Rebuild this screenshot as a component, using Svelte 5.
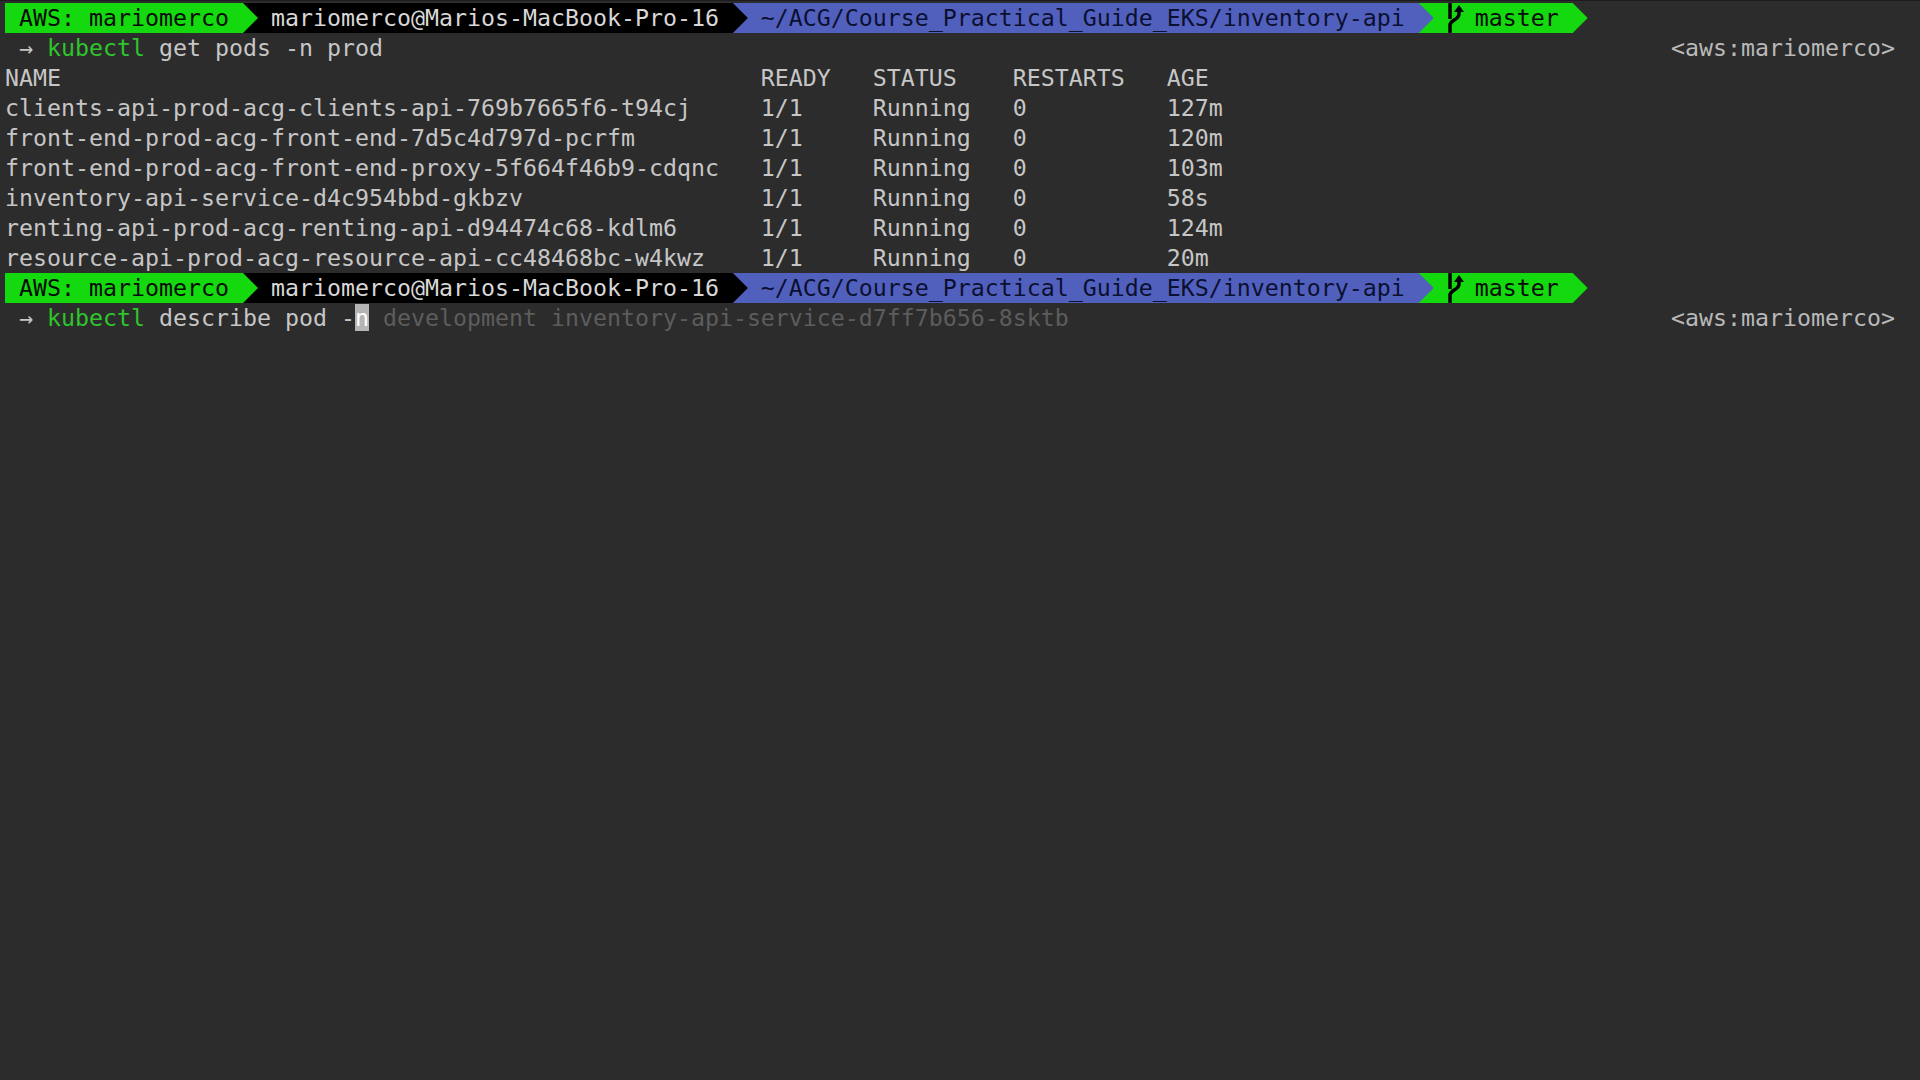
<script>
    const segments = [
        {text: ' AWS: mariomerco ', cls: 'green', next: 'black'},
        {text: ' mariomerco@Marios-MacBook-Pro-16 ', cls: 'black', next: 'blue'},
        {text: ' ~/ACG/Course_Practical_Guide_EKS/inventory-api ', cls: 'blue', next: 'green'},
        {text: 'master ', cls: 'green', next: 'none', branch: true}
    ];

    const pods = [
        ['clients-api-prod-acg-clients-api-769b7665f6-t94cj', '127m'],
        ['front-end-prod-acg-front-end-7d5c4d797d-pcrfm', '120m'],
        ['front-end-prod-acg-front-end-proxy-5f664f46b9-cdqnc', '103m'],
        ['inventory-api-service-d4c954bbd-gkbzv', '58s'],
        ['renting-api-prod-acg-renting-api-d94474c68-kdlm6', '124m'],
        ['resource-api-prod-acg-resource-api-cc48468bc-w4kwz', '20m']
    ];
</script>

{#snippet prompt()}
    <div class="line bar">
        {#each segments as seg}
            <span class="seg {seg.cls}">{#if seg.branch}<span class="branch"><svg width="42" height="30" viewBox="0 0 42 30"><path d="M17 0V16M17 30V22C17 17 26 17 26 11V7" fill="none" stroke="#000" stroke-width="3.500"/><path d="M21 9L26 2L31 9Z" fill="#000"/></svg></span>{/if}{seg.text}</span>
            <span class="arrow {seg.next}"><i class={seg.cls}></i></span>
        {/each}
    </div>
{/snippet}

{#snippet rprompt()}
    <span class="right">&lt;aws:mariomerco&gt;</span>
{/snippet}

<main class="term">
    {@render prompt()}
    <div class="line">
        <span class="input"><span class="dim">→</span> <span class="cmd">kubectl</span> get pods -n prod</span>
        {@render rprompt()}
    </div>
    <div class="line table"><span>NAME</span><span>READY</span><span>STATUS</span><span>RESTARTS</span><span>AGE</span></div>
    {#each pods as pod}
        <div class="line table"><span>{pod[0]}</span><span>1/1</span><span>Running</span><span>0</span><span>{pod[1]}</span></div>
    {/each}
    {@render prompt()}
    <div class="line">
        <span class="input"><span class="dim">→</span> <span class="cmd">kubectl</span> describe pod -<span class="cursor">n</span> <span class="ghost">development inventory-api-service-d7ff7b656-8sktb</span></span>
        {@render rprompt()}
    </div>
</main>

<style>
    :global(body) {
        background: #2c2c2c;
    }
    .term {
        box-sizing: border-box;
        height: 1080px;
        padding: 2px 25px 0 5px;
        border-top: 1px solid #1c1c1c;
        background: #2c2c2c;
        color: #c6c6c6;
        font-family: "DejaVu Sans Mono", monospace;
        font-size: 23.25px;
        line-height: 30px;
        overflow: hidden;
    }
    .line {
        display: flex;
        justify-content: space-between;
        height: 30px;
        white-space: pre;
    }
    .bar {
        justify-content: flex-start;
    }
    .seg {
        display: flex;
    }
    .green {
        background: #14d90f;
        color: #050a05;
    }
    .black {
        background: #000;
        color: #d8d8d8;
    }
    .blue {
        background: #5260bd;
        color: #0b1030;
    }
    .none {
        background: transparent;
    }
    .arrow {
        width: 1ch;
        height: 30px;
    }
    .arrow i {
        display: block;
        width: 15px;
        height: 100%;
        clip-path: polygon(0 0, 100% 50%, 0 100%);
    }
    .branch {
        display: block;
        width: 3ch;
        height: 30px;
    }
    .branch svg {
        display: block;
    }
    .table {
        display: grid;
        grid-template-columns: 54ch 8ch 10ch 11ch 1fr;
    }
    .input {
        padding-left: 1ch;
    }
    .cmd {
        color: #2fc52c;
    }
    .dim {
        color: #c6c6c6;
    }
    .cursor {
        background: #b5b5b5;
        color: #fff;
    }
    .ghost {
        color: #5d5d5d;
    }
    .right {
        color: #b9b9b9;
    }
</style>
